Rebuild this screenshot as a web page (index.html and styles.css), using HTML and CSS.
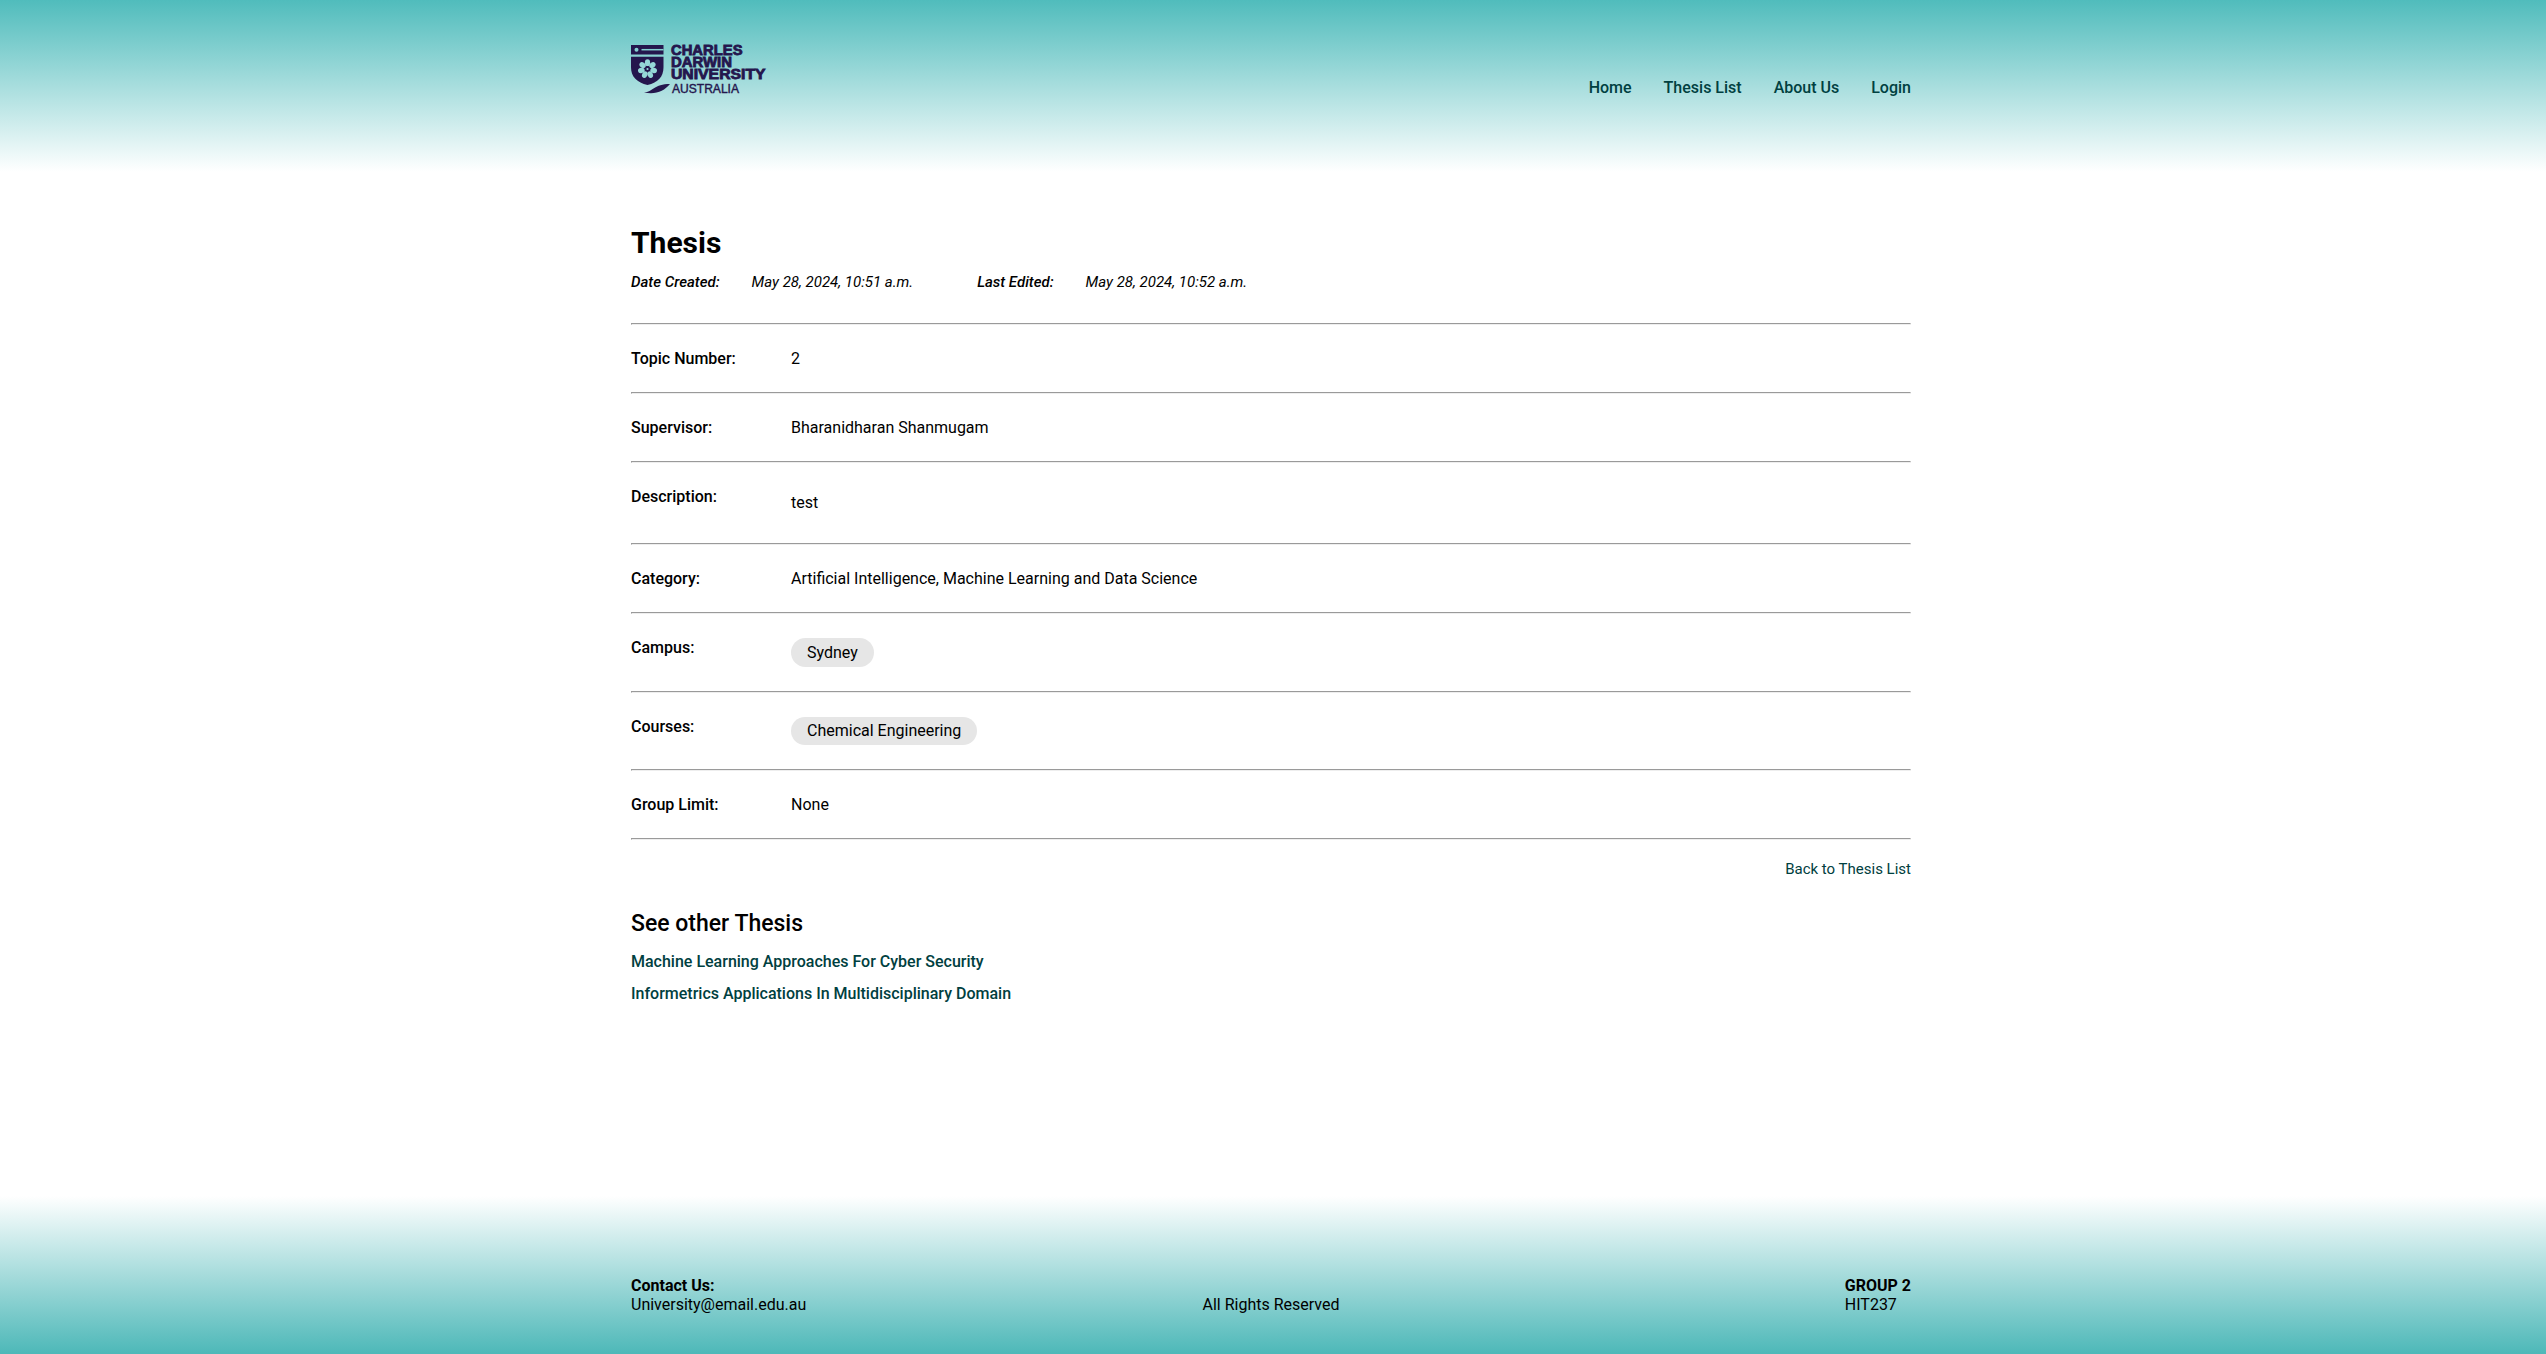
FILE: index.html
```html
<!DOCTYPE html>
<html lang="en">
<head>
<meta charset="utf-8">
<title>Thesis</title>
<link rel="stylesheet" href="styles.css">
</head>
<body>
<header class="site-header">
  <div class="container header-inner">
    <a class="logo" aria-label="Charles Darwin University Australia">
      <svg width="136" height="52" viewBox="0 0 136 52">
        <g fill="#24164d">
          <path d="M0 1H32.500V10.500H0Z"/>
          <path d="M0 12.700H32.500V23C32.500 33 27 38.500 16.500 41C6 38.500 0 33 0 23Z"/>
          <path d="M13 48.500C22 48 23 40 39 40C33 47 25 51 13 48.500Z"/>
        </g>
        <path d="M10.500 5.700H32.500" stroke="#83d0d0" stroke-width="1.500"/>
        <circle cx="5.500" cy="5.700" r="2" fill="#83d0d0"/>
        <g fill="#95d7d7" transform="translate(16.500 25)">
          <ellipse cy="-6.300" rx="2.650" ry="3.400"/>
          <ellipse cy="-6.300" rx="2.650" ry="3.400" transform="rotate(51.400)"/>
          <ellipse cy="-6.300" rx="2.650" ry="3.400" transform="rotate(102.900)"/>
          <ellipse cy="-6.300" rx="2.650" ry="3.400" transform="rotate(154.300)"/>
          <ellipse cy="-6.300" rx="2.650" ry="3.400" transform="rotate(205.700)"/>
          <ellipse cy="-6.300" rx="2.650" ry="3.400" transform="rotate(257.100)"/>
          <ellipse cy="-6.300" rx="2.650" ry="3.400" transform="rotate(308.600)"/>
          <circle r="1.100"/>
        </g>
        <g class="logo-name">
          <text x="40" y="11.300" textLength="71.500" lengthAdjust="spacingAndGlyphs">CHARLES</text>
          <text x="40" y="23.300" textLength="61" lengthAdjust="spacingAndGlyphs">DARWIN</text>
          <text x="40" y="35.300" textLength="94.500" lengthAdjust="spacingAndGlyphs">UNIVERSITY</text>
        </g>
        <text class="logo-country" x="41" y="48.500" textLength="67" lengthAdjust="spacingAndGlyphs">AUSTRALIA</text>
      </svg>
    </a>
    <nav class="nav">
      <a>Home</a><a>Thesis List</a><a>About Us</a><a>Login</a>
    </nav>
  </div>
</header>
<main class="container main">
  <h1>Thesis</h1>
  <div class="dates">
    <div class="date"><b>Date Created:</b><span>May 28, 2024, 10:51 a.m.</span></div>
    <div class="date"><b>Last Edited:</b><span>May 28, 2024, 10:52 a.m.</span></div>
  </div>
  <hr>
  <div class="row"><b>Topic Number:</b><span>2</span></div>
  <hr>
  <div class="row"><b>Supervisor:</b><span>Bharanidharan Shanmugam</span></div>
  <hr>
  <div class="row"><b>Description:</b><p class="description">test</p></div>
  <hr>
  <div class="row"><b>Category:</b><span>Artificial Intelligence, Machine Learning and Data Science</span></div>
  <hr>
  <div class="row"><b>Campus:</b><span class="pill">Sydney</span></div>
  <hr>
  <div class="row"><b>Courses:</b><span class="pill">Chemical Engineering</span></div>
  <hr>
  <div class="row"><b>Group Limit:</b><span>None</span></div>
  <hr>
  <a class="back">Back to Thesis List</a>
  <h2>See other Thesis</h2>
  <div class="others">
    <a>Machine Learning Approaches For Cyber Security</a>
    <a>Informetrics Applications In Multidisciplinary Domain</a>
  </div>
</main>
<footer class="site-footer">
  <div class="container footer-inner">
    <div><strong>Contact Us:</strong><br>University@email.edu.au</div>
    <div>All Rights Reserved</div>
    <div class="group"><strong>GROUP 2</strong><br>HIT237</div>
  </div>
</footer>
</body>
</html>
```
FILE: styles.css
```css
* { box-sizing: border-box; }
body {
  margin: 0;
  min-height: 1354px;
  display: flex;
  flex-direction: column;
  background: #fff;
  color: #000;
  font: 16px/19px Roboto, sans-serif;
}
.container { width: 1280px; margin-left: calc(50% - 642px); }
.site-header { height: 172px; background: linear-gradient(#50bcbc, #fff); }
.header-inner { display: flex; justify-content: space-between; padding-top: 44px; }
.logo { display: block; height: 52px; }
.logo svg { display: block; }
.logo-name { font: bold 13.8px "Liberation Sans", sans-serif; fill: #24164d; stroke: #24164d; stroke-width: .8px; }
.logo-country { font: 12.5px "Liberation Sans", sans-serif; fill: #24164d; stroke: #24164d; stroke-width: .4px; }
.nav { display: flex; gap: 32px; padding-top: 34px; }
.nav a, .others a { color: #004040; font-weight: 500; }
.main { padding-top: 53px; }
h1 { margin: 0; font-size: 30px; line-height: 35px; font-weight: 700; }
.dates { display: flex; gap: 64px; margin-top: 13px; height: 50px; font-size: 15px; font-style: italic; }
.date { display: flex; gap: 32px; }
b { font-weight: 500; }
hr { width: 100%; margin: 0; border: 1px solid #eee; border-top-color: #9a9a9a; border-left-color: #9a9a9a; height: 2px; }
.row { display: flex; align-items: flex-start; padding: 24px 0 23.75px; }
.row b { width: 160px; flex: none; }
.description { margin: 0; padding: 6px 0 7.75px; }
.pill { padding: 4.875px 16px; border-radius: 16px; background: #e6e6e6; }
.row:has(.pill) { padding-bottom: 24px; }
.back { display: block; margin-top: 20px; text-align: right; font-size: 15px; color: #004040; }
h2 { margin: 31px 0 0; font-size: 23px; line-height: 27px; font-weight: 500; }
.others { display: flex; flex-direction: column; gap: 13px; margin-top: 15px; }
.site-footer { margin-top: auto; height: 158px; background: linear-gradient(#fff, #4db8b8); }
.footer-inner { display: grid; grid-template-columns: 1fr auto 1fr; align-items: end; padding-top: 80px; }
.group { justify-self: end; }
```
